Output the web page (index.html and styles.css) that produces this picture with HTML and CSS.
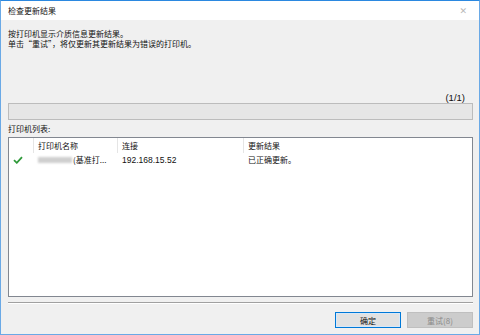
FILE: index.html
```html
<!DOCTYPE html>
<html lang="zh-CN">
<head>
    <meta charset="UTF-8">
    <title>检查更新结果</title>
    <link rel="stylesheet" href="styles.css">
</head>
<body>
    <div class="window">
        <div class="title-bar">
            <span class="title">检查更新结果</span>
            <span class="close">&#x2715;</span>
        </div>
        <div class="content">
            <p class="intro">按打印机显示介质信息更新结果。<br>单击“重试”，将仅更新其更新结果为错误的打印机。</p>
            <div class="count">(1/1)</div>
            <div class="progress"></div>
            <div class="list-label">打印机列表:</div>
            <div class="list-box">
                <div class="row header">
                    <div class="cell c-icon"></div>
                    <div class="cell c-name">打印机名称</div>
                    <div class="cell c-conn">连接</div>
                    <div class="cell c-result">更新结果</div>
                </div>
                <div class="row">
                    <div class="cell c-icon">
                        <svg width="10" height="8" viewBox="0 0 10 8"><path d="M1 4.2 L3.8 6.8 L9 1.2" fill="none" stroke="#2f9a3a" stroke-width="1.8"/></svg>
                    </div>
                    <div class="cell c-name"><span class="blur"></span>(基准打...</div>
                    <div class="cell c-conn">192.168.15.52</div>
                    <div class="cell c-result">已正确更新。</div>
                </div>
            </div>
            <div class="separator"></div>
            <div class="buttons">
                <button class="btn default">确定</button>
                <button class="btn" disabled>重试(8)</button>
            </div>
        </div>
    </div>
</body>
</html>
```

FILE: styles.css
```css
html, body {
    margin: 0;
    padding: 0;
}
body {
    font-family: "Noto Sans CJK SC", "Noto Sans", sans-serif;
    font-size: 8px;
    color: #111;
}
.window {
    width: 480px;
    height: 335px;
    box-sizing: border-box;
    border: 1px solid #6aa9e6;
    border-top-color: #2b88e0;
    display: flex;
    flex-direction: column;
    background: #f0f0f0;
}
.title-bar {
    height: 19px;
    background: #fff;
    display: flex;
    align-items: center;
    justify-content: space-between;
    padding: 0 12px 0 7px;
    flex-shrink: 0;
}
.title {
    font-size: 8px;
    color: #111;
}
.close {
    font-size: 9px;
    color: #b8b8b8;
    font-family: "DejaVu Sans", sans-serif;
}
.content {
    flex: 1;
    display: flex;
    flex-direction: column;
    padding: 8px 6px 0 7px;
}
.intro {
    margin: 0;
    line-height: 10px;
    padding-top: 1px;
}
.count {
    text-align: right;
    margin-top: 44px;
    padding-right: 8px;
    line-height: 10px;
    font-size: 9.5px;
    font-family: "Liberation Sans", sans-serif;
}
.progress {
    height: 15px;
    background: #e6e6e6;
    border: 1px solid #bcbcbc;
}
.list-label {
    margin-top: 4px;
    line-height: 10px;
}
.list-box {
    height: 158px;
    margin-top: 3px;
    background: #fff;
    border: 1px solid #828790;
}
.row {
    display: flex;
    height: 13px;
    align-items: center;
}
.row.header {
    height: 15px;
}
.cell {
    box-sizing: border-box;
    padding-left: 4px;
    height: 100%;
    display: flex;
    align-items: center;
    white-space: nowrap;
}
.header .cell {
    border-right: 1px solid #e5e5e5;
}
.header .c-result {
    border-right: none;
}
.c-icon {
    width: 25px;
}
.c-name {
    width: 84px;
}
.c-conn {
    width: 126px;
    font-size: 8.5px;
    font-family: "Liberation Sans", "Noto Sans CJK SC", sans-serif;
}
.header .c-conn {
    font-size: 8px;
    font-family: "Noto Sans CJK SC", sans-serif;
}
.c-result {
    flex: 1;
}
.blur {
    display: inline-block;
    width: 34px;
    height: 6px;
    background: #cfcfcf;
    filter: blur(1px);
    margin-right: 1px;
}
.separator {
    margin-top: 5px;
    border-top: 1px solid #a0a0a0;
    border-bottom: 1px solid #fff;
}
.buttons {
    display: flex;
    justify-content: flex-end;
    gap: 6px;
    margin-top: 8px;
}
.btn {
    width: 66px;
    height: 16px;
    font-family: "Noto Sans CJK SC", sans-serif;
    font-size: 8px;
    padding: 0;
    background: #e1e1e1;
    border: 1px solid #adadad;
    color: #111;
}
.btn.default {
    border: 1px solid #0078d7;
    box-shadow: inset 0 0 0 1px #d8e8f8;
}
.btn:disabled {
    background: #cccccc;
    border-color: #bfbfbf;
    color: #8a8a8a;
}
```
